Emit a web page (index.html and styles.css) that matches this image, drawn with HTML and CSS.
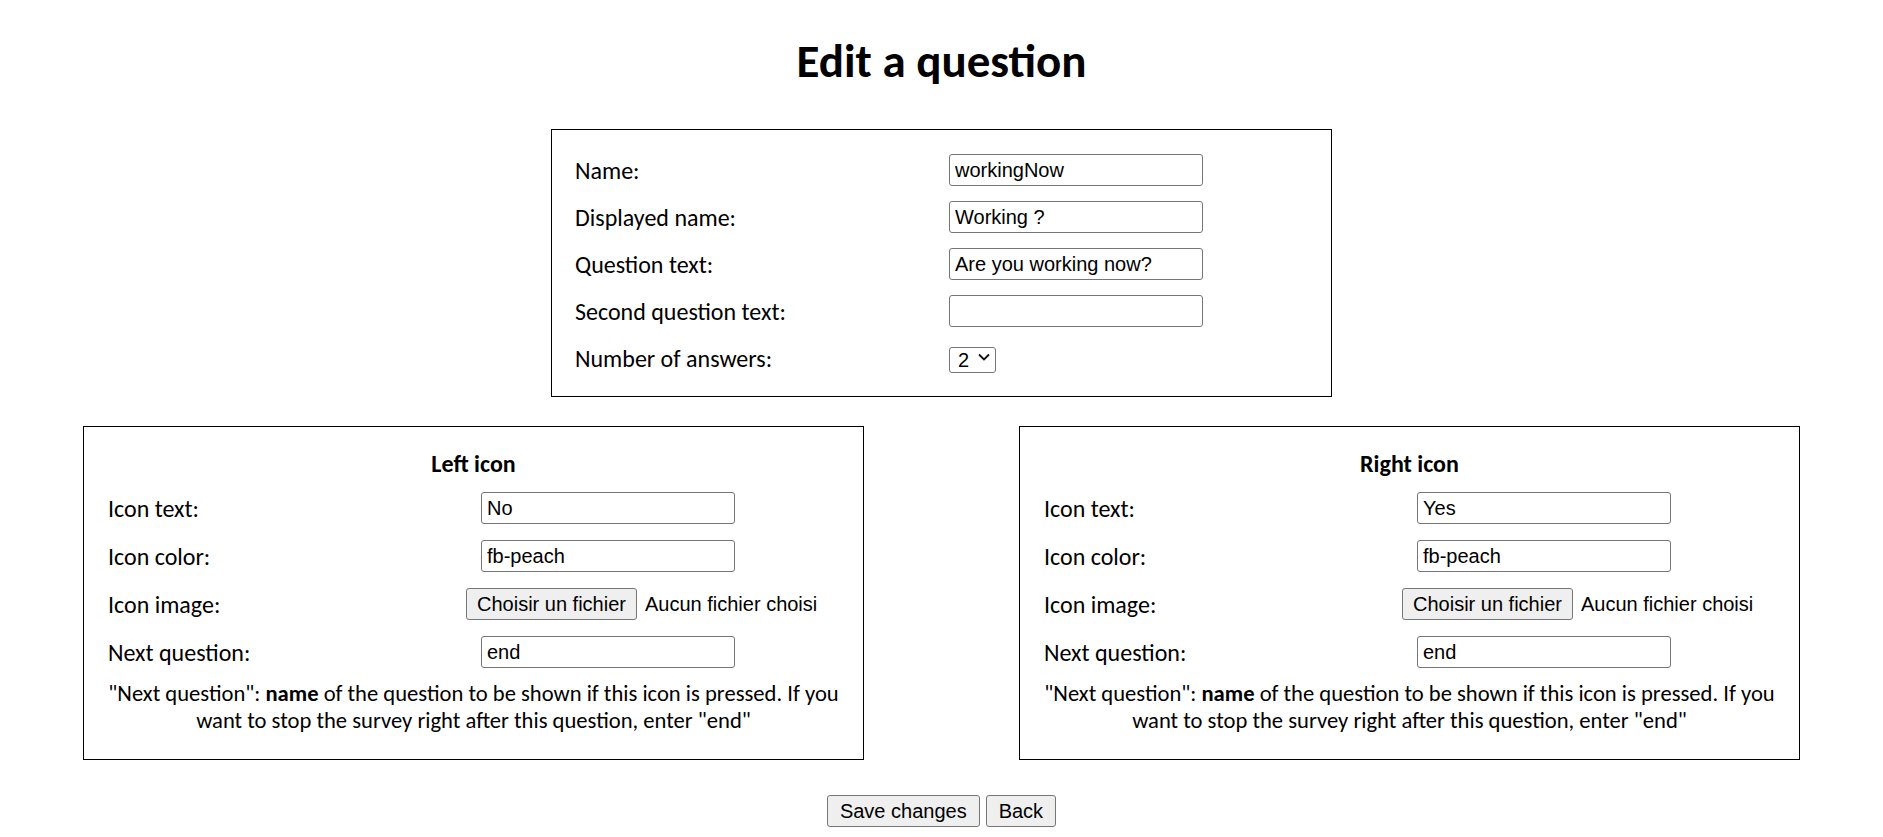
FILE: index.html
```html
<!DOCTYPE html>
<html lang="en">
<head>
<meta charset="utf-8">
<title>Edit a question</title>
<link rel="stylesheet" href="styles.css">
</head>
<body>
<main class="page">
  <h1 class="title">Edit a question</h1>
  <form class="edit-form" onsubmit="return false">
    <section class="card card-main">
      <div class="form-grid grid-main">
        <label class="field-label" for="q-name">Name:</label>
        <div class="field"><input class="text-input" id="q-name" type="text" value="workingNow"></div>
        <label class="field-label" for="q-display">Displayed name:</label>
        <div class="field"><input class="text-input" id="q-display" type="text" value="Working ?"></div>
        <label class="field-label" for="q-text">Question text:</label>
        <div class="field"><input class="text-input" id="q-text" type="text" value="Are you working now?"></div>
        <label class="field-label" for="q-text2">Second question text:</label>
        <div class="field"><input class="text-input" id="q-text2" type="text" value=""></div>
        <label class="field-label" for="q-count">Number of answers:</label>
        <div class="field">
          <span class="select-wrap">
            <select class="select" id="q-count">
              <option>1</option>
              <option selected>2</option>
              <option>3</option>
            </select>
            <svg class="chevron" width="12" height="8" viewBox="0 0 12 8" aria-hidden="true"><polyline points="1,1.5 6,6.5 11,1.5" fill="none" stroke="#111" stroke-width="1.8"/></svg>
          </span>
        </div>
      </div>
    </section>

    <div class="icon-cards">
      <section class="card card-icon">
        <h2 class="card-title">Left icon</h2>
        <div class="form-grid grid-icon">
          <label class="field-label" for="l-text">Icon text:</label>
          <div class="field"><input class="text-input" id="l-text" type="text" value="No"></div>
          <label class="field-label" for="l-color">Icon color:</label>
          <div class="field"><input class="text-input" id="l-color" type="text" value="fb-peach"></div>
          <span class="field-label">Icon image:</span>
          <div class="field field-file"><button type="button" class="btn btn-file">Choisir un fichier</button><span class="file-status">Aucun fichier choisi</span></div>
          <label class="field-label" for="l-next">Next question:</label>
          <div class="field"><input class="text-input" id="l-next" type="text" value="end"></div>
        </div>
        <p class="help">"Next question": <strong>name</strong> of the question to be shown if this icon is pressed. If you<br>want to stop the survey right after this question, enter "end"</p>
      </section>

      <section class="card card-icon">
        <h2 class="card-title">Right icon</h2>
        <div class="form-grid grid-icon">
          <label class="field-label" for="r-text">Icon text:</label>
          <div class="field"><input class="text-input" id="r-text" type="text" value="Yes"></div>
          <label class="field-label" for="r-color">Icon color:</label>
          <div class="field"><input class="text-input" id="r-color" type="text" value="fb-peach"></div>
          <span class="field-label">Icon image:</span>
          <div class="field field-file"><button type="button" class="btn btn-file">Choisir un fichier</button><span class="file-status">Aucun fichier choisi</span></div>
          <label class="field-label" for="r-next">Next question:</label>
          <div class="field"><input class="text-input" id="r-next" type="text" value="end"></div>
        </div>
        <p class="help">"Next question": <strong>name</strong> of the question to be shown if this icon is pressed. If you<br>want to stop the survey right after this question, enter "end"</p>
      </section>
    </div>

    <div class="actions">
      <button type="submit" class="btn">Save changes</button>
      <button type="button" class="btn">Back</button>
    </div>
  </form>
</main>
</body>
</html>
```

FILE: styles.css
```css
* { box-sizing: border-box; }

html, body {
  margin: 0;
  background: #fff;
}

body {
  font-family: Carlito, Lato, sans-serif;
  font-size: 24px;
  color: #000;
}

.page {
  padding-top: 36px;
}

.title {
  margin: 0;
  text-align: center;
  font-size: 47px;
  line-height: 50px;
  font-weight: 700;
}

.edit-form {
  margin-top: 43px;
}

.card {
  border: 1px solid #000;
  background: #fff;
}

.card-main {
  width: 781px;
  margin: 0 auto;
  padding: 24px 24px 22px 23px;
}

.form-grid {
  display: grid;
  grid-template-columns: 373px 1fr;
  grid-auto-rows: 32px;
  row-gap: 15px;
  align-items: center;
}

.grid-main {
  grid-template-columns: 374px 1fr;
}

.field {
  display: flex;
  align-items: center;
}

.field-label {
  line-height: 29px;
}

.text-input {
  width: 254px;
  height: 32px;
  margin: 0;
  border: 1px solid #767676;
  border-radius: 3px;
  padding: 0 5px;
  font: 20px "Liberation Sans", Arial, sans-serif;
  color: #000;
  background: #fff;
}

.select-wrap {
  position: relative;
  display: inline-block;
}

.select {
  appearance: none;
  -webkit-appearance: none;
  width: 47px;
  height: 26px;
  margin: 0;
  border: 1px solid #767676;
  border-radius: 3px;
  padding: 0 0 0 8px;
  font: 20px "Liberation Sans", Arial, sans-serif;
  color: #000;
  background: #fff;
}

.chevron {
  position: absolute;
  right: 6px;
  top: 9px;
  pointer-events: none;
}

.icon-cards {
  display: flex;
  justify-content: center;
  gap: 155px;
  margin-top: 29px;
}

.card-icon {
  width: 781px;
  padding: 22px 24px 25px;
}

.card-title {
  margin: 0 0 14px;
  text-align: center;
  font-size: 24px;
  line-height: 29px;
  font-weight: 700;
}

.grid-icon {
  row-gap: 16px;
}

.field-file {
  margin-left: -15px;
}

.file-status {
  margin-left: 8px;
  font: 20px "Liberation Sans", Arial, sans-serif;
  color: #000;
  white-space: nowrap;
}

.help {
  margin: 12px 0 0;
  text-align: center;
  font-size: 22.6px;
  line-height: 27px;
  white-space: nowrap;
}

.help strong {
  font-weight: 700;
}

.btn {
  height: 32px;
  margin: 0;
  padding: 0 12px;
  border: 1px solid #767676;
  border-radius: 3px;
  background: #efefef;
  color: #000;
  font: 20px "Liberation Sans", Arial, sans-serif;
}

.btn-file {
  padding: 0 10px;
}

.actions {
  display: flex;
  justify-content: center;
  gap: 6px;
  margin-top: 35px;
}
```
